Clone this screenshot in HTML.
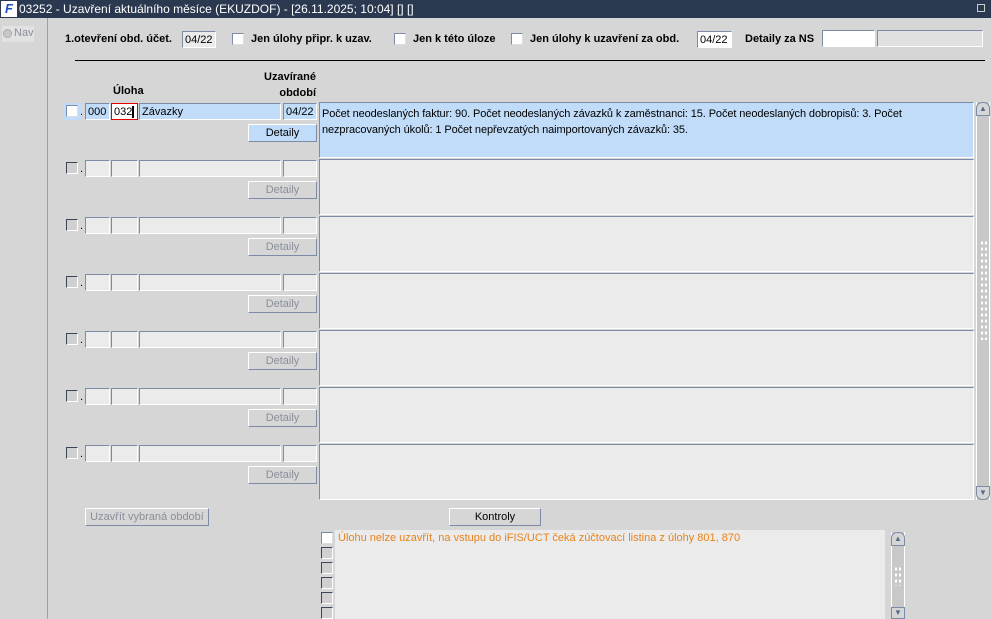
<!DOCTYPE html>
<html><head><meta charset="utf-8"><style>
*{box-sizing:border-box;margin:0;padding:0}
body{width:991px;height:619px;background:#d6d6d6;font-family:"Liberation Sans",Arial,sans-serif;font-size:11px;color:#000;position:relative;overflow:hidden}
.a{position:absolute}
.t{position:absolute;white-space:nowrap}
.b{font-weight:bold}
.f{position:absolute;border:1px solid;border-color:#7d8ca6 #fff #fff #7d8ca6;background:#ebebeb;height:17px;padding:1px 2px;line-height:14px}
.cb{position:absolute;width:12px;height:12px;border:1px solid;border-color:#3c4658 #fff #fff #3c4658;background:#d0d0d0}
.cbw{background:#fff;border-color:#7d8ca6 #ddd #ddd #7d8ca6}
.btn{position:absolute;height:18px;border:1px solid;border-color:#fff #7d8ca6 #7d8ca6 #fff;background:#d6d6d6;text-align:center;line-height:16px;color:#8a8f9a}
.ta{position:absolute;left:319px;width:655px;height:56px;background:#ebebeb;border:1px solid;border-color:#7d8ca6 #fff #fff #7d8ca6;padding:3px 2px;line-height:16px}
</style></head><body>
<div class="a" style="left:0;top:0;width:991px;height:18px;background:#2b3950"></div>
<div class="a" style="left:1px;top:1px;width:16px;height:16px;background:#fff;color:#1a4fc0;font-weight:bold;font-style:italic;font-size:13px;line-height:16px;text-align:center">F</div>
<div class="t" style="left:19px;top:1px;color:#fff;font-size:12px;line-height:16px">03252 - Uzavření aktuálního měsíce (EKUZDOF) - [26.11.2025; 10:04] [] []</div>
<div class="a" style="left:977px;top:4px;width:8px;height:8px;border:1px solid #ccc"></div>
<div class="a" style="left:47px;top:18px;width:1px;height:601px;background:#a0a0a0"></div>
<div class="a" style="left:2px;top:26px;width:32px;height:16px;background:#e2e2e2"></div>
<div class="a" style="left:3px;top:29px;width:9px;height:9px;border-radius:50%;background:#c8c8c8;border:1px solid #aaa"></div>
<div class="t" style="left:14px;top:27px;color:#8a8f9a">Nav</div>

<div class="t b" style="left:65px;top:33px">1.otevření obd. účet.</div>
<div class="f" style="left:182px;top:31px;width:34px">04/22</div>
<div class="cb cbw" style="left:232px;top:33px"></div>
<div class="t b" style="left:251px;top:33px">Jen úlohy připr. k uzav.</div>
<div class="cb cbw" style="left:394px;top:33px"></div>
<div class="t b" style="left:413px;top:33px">Jen k této úloze</div>
<div class="cb cbw" style="left:511px;top:33px"></div>
<div class="t b" style="left:530px;top:33px">Jen úlohy k uzavření za obd.</div>
<div class="f" style="left:697px;top:31px;width:35px;background:#fff">04/22</div>
<div class="t b" style="left:745px;top:33px">Detaily za NS</div>
<div class="f" style="left:822px;top:30px;width:53px;background:#fff"></div>
<div class="f" style="left:877px;top:30px;width:106px;background:#e0e0e0"></div>
<div class="a" style="left:75px;top:60px;width:910px;height:1px;background:#000"></div>

<div class="t b" style="left:113px;top:85px">Úloha</div>
<div class="t b" style="left:250px;top:69px;width:66px;text-align:right;line-height:16px">Uzavírané<br>období</div>

<!-- row 1 -->
<div class="a" style="left:64px;top:103px;width:18px;height:17px;background:#c0dcf8"></div>
<div class="cb cbw" style="left:66px;top:105px"></div>
<div class="t" style="left:80px;top:106px">.</div>
<div class="f" style="left:85px;top:103px;width:25px;background:#c0dcf8">000</div>
<div class="f" style="left:111px;top:103px;width:27px;background:#fff;border:1px solid #e00000 !important;border-color:#e00000 !important">032<span style="display:inline-block;width:2px;height:12px;background:#000;vertical-align:middle"></span></div>
<div class="f" style="left:139px;top:103px;width:142px;background:#c0dcf8">Závazky</div>
<div class="f" style="left:283px;top:103px;width:34px;background:#c0dcf8">04/22</div>
<div class="btn" style="left:248px;top:124px;width:69px;background:#c0dcf8;color:#000">Detaily</div>
<div class="ta" style="top:102px;background:#c0dcf8;letter-spacing:-0.1px">Počet neodeslaných faktur: 90. Počet neodeslaných závazků k zaměstnanci: 15. Počet neodeslaných dobropisů: 3. Počet nezpracovaných úkolů: 1 Počet nepřevzatých naimportovaných závazků: 35.</div>

<!-- rows 2-7 -->
<div class="cb" style="left:66px;top:162px"></div><div class="t" style="left:80px;top:163px">.</div><div class="f" style="left:85px;top:160px;width:25px"></div><div class="f" style="left:111px;top:160px;width:27px"></div><div class="f" style="left:139px;top:160px;width:142px"></div><div class="f" style="left:283px;top:160px;width:34px"></div><div class="btn" style="left:248px;top:181px;width:69px">Detaily</div><div class="ta" style="top:159px"></div>
<div class="cb" style="left:66px;top:219px"></div><div class="t" style="left:80px;top:220px">.</div><div class="f" style="left:85px;top:217px;width:25px"></div><div class="f" style="left:111px;top:217px;width:27px"></div><div class="f" style="left:139px;top:217px;width:142px"></div><div class="f" style="left:283px;top:217px;width:34px"></div><div class="btn" style="left:248px;top:238px;width:69px">Detaily</div><div class="ta" style="top:216px"></div>
<div class="cb" style="left:66px;top:276px"></div><div class="t" style="left:80px;top:277px">.</div><div class="f" style="left:85px;top:274px;width:25px"></div><div class="f" style="left:111px;top:274px;width:27px"></div><div class="f" style="left:139px;top:274px;width:142px"></div><div class="f" style="left:283px;top:274px;width:34px"></div><div class="btn" style="left:248px;top:295px;width:69px">Detaily</div><div class="ta" style="top:273px"></div>
<div class="cb" style="left:66px;top:333px"></div><div class="t" style="left:80px;top:334px">.</div><div class="f" style="left:85px;top:331px;width:25px"></div><div class="f" style="left:111px;top:331px;width:27px"></div><div class="f" style="left:139px;top:331px;width:142px"></div><div class="f" style="left:283px;top:331px;width:34px"></div><div class="btn" style="left:248px;top:352px;width:69px">Detaily</div><div class="ta" style="top:330px"></div>
<div class="cb" style="left:66px;top:390px"></div><div class="t" style="left:80px;top:391px">.</div><div class="f" style="left:85px;top:388px;width:25px"></div><div class="f" style="left:111px;top:388px;width:27px"></div><div class="f" style="left:139px;top:388px;width:142px"></div><div class="f" style="left:283px;top:388px;width:34px"></div><div class="btn" style="left:248px;top:409px;width:69px">Detaily</div><div class="ta" style="top:387px"></div>
<div class="cb" style="left:66px;top:447px"></div><div class="t" style="left:80px;top:448px">.</div><div class="f" style="left:85px;top:445px;width:25px"></div><div class="f" style="left:111px;top:445px;width:27px"></div><div class="f" style="left:139px;top:445px;width:142px"></div><div class="f" style="left:283px;top:445px;width:34px"></div><div class="btn" style="left:248px;top:466px;width:69px">Detaily</div><div class="ta" style="top:444px"></div>

<!-- main scrollbar -->
<div class="a" style="left:976px;top:102px;width:14px;height:398px;background:#c8c8c8;border-left:1px solid #fff;border-right:1px solid #fff"></div>
<div class="a" style="left:976px;top:102px;width:14px;height:14px;border:1px solid #7d8ca6;border-radius:6px 6px 0 0;background:#d6d6d6;color:#5a6a86;font-size:8px;text-align:center;line-height:12px">▲</div>
<div class="a" style="left:976px;top:486px;width:14px;height:14px;border:1px solid #7d8ca6;border-radius:0 0 6px 6px;background:#d6d6d6;color:#5a6a86;font-size:8px;text-align:center;line-height:12px">▼</div>
<div class="a" style="left:980px;top:240px;width:8px;height:100px;background-image:radial-gradient(#fff 1px,transparent 1.3px);background-size:4px 6px"></div>

<div class="btn" style="left:85px;top:508px;width:124px">Uzavřít vybraná období</div>
<div class="btn" style="left:449px;top:508px;width:92px;color:#000">Kontroly</div>

<div class="a" style="left:335px;top:530px;width:550px;height:89px;background:#ebebeb"></div>
<div class="cb cbw" style="left:321px;top:532px"></div>
<div class="t" style="left:338px;top:532px;color:#e8821a">Úlohu nelze uzavřít, na vstupu do iFIS/UCT čeká zúčtovací listina z úlohy 801, 870</div>
<div class="cb" style="left:321px;top:547px"></div>
<div class="cb" style="left:321px;top:562px"></div>
<div class="cb" style="left:321px;top:577px"></div>
<div class="cb" style="left:321px;top:592px"></div>
<div class="cb" style="left:321px;top:607px"></div>
<div class="a" style="left:891px;top:532px;width:14px;height:87px;background:#c8c8c8;border-left:1px solid #fff;border-right:1px solid #fff"></div>
<div class="a" style="left:891px;top:532px;width:14px;height:14px;border:1px solid #7d8ca6;border-radius:6px 6px 0 0;background:#d6d6d6;color:#5a6a86;font-size:8px;text-align:center;line-height:12px">▲</div>
<div class="a" style="left:891px;top:607px;width:14px;height:12px;border:1px solid #7d8ca6;background:#d6d6d6;color:#5a6a86;font-size:8px;text-align:center;line-height:10px">▼</div>
<div class="a" style="left:894px;top:566px;width:8px;height:20px;background-image:radial-gradient(#fff 1px,transparent 1.3px);background-size:4px 6px"></div>
</body></html>
